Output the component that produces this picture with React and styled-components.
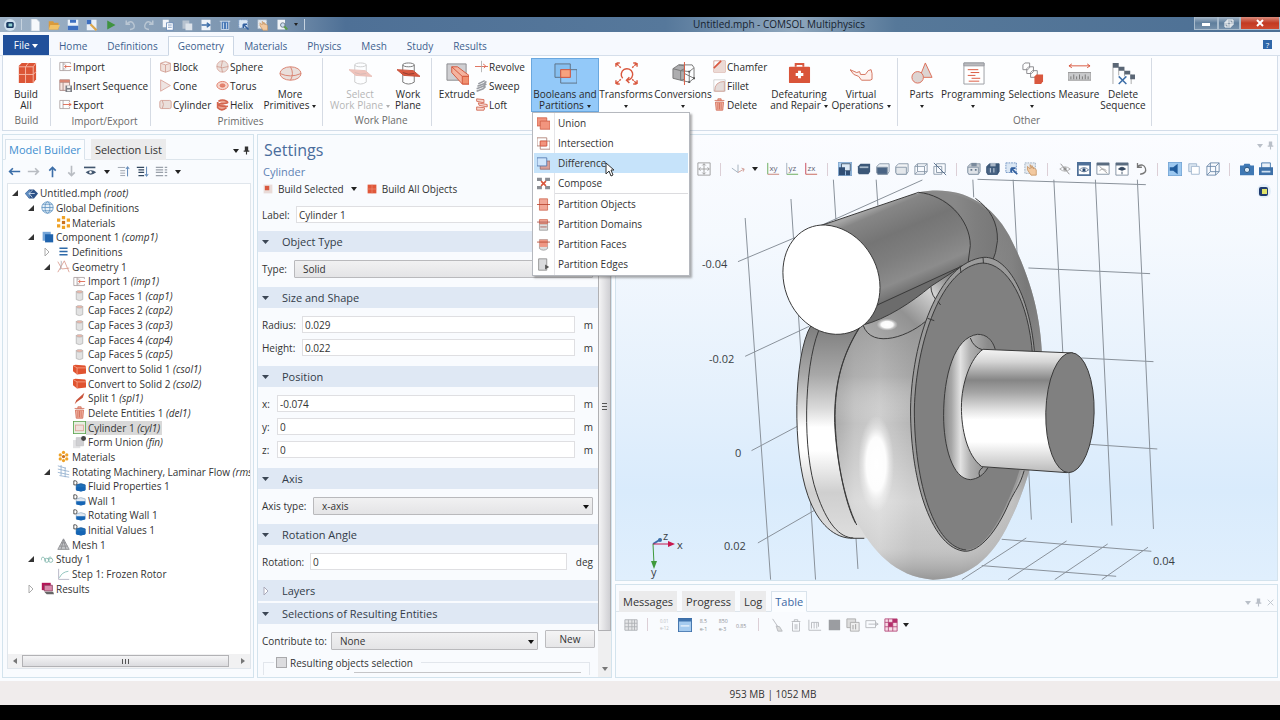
import React from "react";
import styled, { createGlobalStyle, css } from "styled-components";

const R = "#d9583f";
const P = "#f3b5a5";
const B = "#3c6ea8";
const N = "#42566f";

const Global = createGlobalStyle`
  * { box-sizing: border-box; }
  body { margin: 0; background: #000; }
  body, button, input, select { font-family: "Open Sans", "Noto Sans", sans-serif; font-size: 10px; color: #333; }
  button { border: 0; padding: 0; background: none; }
`;

/* ---------- icons ---------- */

const cyl = (s, f) => (
  <g stroke={s} fill={f}>
    <path d="M4 3v10q4 2.500 8 0V3z" />
    <ellipse cx="8" cy="3.500" rx="4" ry="1.500" fill={P} />
  </g>
);
const brick = (
  <>
    <path d="M0 3l3-1 12 1 1 2v8l-11 1-5-4z" fill="#e0532f" />
    <path d="M0 3l5 3h11M5 6v8" stroke="#f7a58d" fill="none" />
  </>
);
const blueNode = (top) => (
  <>
    <path d="M4 6q6-3 11 0v6q-5 3-11 0z" fill={top ? "#dfe7f0" : "#1f6fb8"} stroke={top ? "#9fb6cd" : "#1f5f9f"} />
    <path d="M4 9h11v4q-5 2-11 0z" fill="#1565b5" />
    <path d="M1 1h2q2 0 2 2.500T3 6H1z" fill="#fff" stroke="#333" />
  </>
);
const axes = (a, b, s) => (
  <>
    <path d="M2 1v13" stroke={a} fill="none" />
    <path d="M2 14h13" stroke={b} fill="none" />
    <text x="4" y="10" fontSize="9" fill="#667">{s}</text>
  </>
);
const cube = (front, top, line) => (
  <g stroke={line} strokeLinejoin="round">
    <path d="M1 5l3-3h11v9l-2 3H2l-1-2z" fill={top} />
    <path d="M1 6h12v8H2l-1-2z" fill={front} />
  </g>
);
const lens = (fill) => (
  <>
    <path d="M1 8q7-7 14 0q-7 6-14 0z" fill="#fff" stroke={fill} />
    <circle cx="8" cy="8" r="2.500" fill={fill} />
  </>
);
const plane = (
  <g fill="none">
    <ellipse cx="12" cy="3" rx="6" ry="2" stroke="#777" />
    <path d="M6 3v18q6 4 12 0V3" stroke="#777" />
    <path d="M0 8l17 1 7 6-17-1z" fill={R} stroke="#c5513b" />
    <path d="M6 11q6 3 12 1" stroke="#8c3d30" />
  </g>
);

const ICONS = {
  app: <><circle cx="8" cy="8" r="8" fill="#cfe0ee" /><rect x="3" y="4" width="10" height="8" rx="2" fill="#16365f" /><rect x="6" y="6" width="5" height="4" fill="#8fd0d0" /></>,
  page: <path d="M3 0h7l4 4v12H3z" fill="#f6f8fb" stroke="#c8d2dc" />,
  open: <><path d="M1 3h6l1 2h6v9H1z" fill="#d99a3c" /><path d="M3 8h13l-3 6H1z" fill="#f1c267" /></>,
  save: <><path d="M1 1h14v14H1z" fill="#e9f0f8" /><path d="M1 9h14v6H1zM4 1h8v4H4z" fill="#3d6fc0" /></>,
  savePen: <><path d="M1 1h13v14H1z" fill="#e9f0f8" /><path d="M1 1h6v6H1z" fill="#3d6fc0" /><path d="M6 7l8 8" stroke="#dca64b" strokeWidth="3" /></>,
  play: <path d="M3 2l11 6-11 6z" fill="#3f9340" />,
  undo: <path d="M4 6q6-5 9 1t-5 7M3 2v5h5" fill="none" stroke="#b9c6d3" strokeWidth="2" />,
  redo: <path d="M12 6q-6-5-9 1t5 7M13 2v5H8" fill="none" stroke="#b9c6d3" strokeWidth="2" />,
  copy: <><path d="M1 1h8v10H1z" fill="#f2f5f9" /><path d="M6 5h9v10H6z" fill="#fff" stroke="#5a7fb0" /><path d="M8 8h5M8 11h5" stroke="#5a7fb0" /></>,
  paste: <><path d="M2 2h9v11H2z" fill="#b6c2cf" /><path d="M6 6h9v9H6z" fill="#dce3ea" /></>,
  dup: <><path d="M2 1h12v14H2z" fill="#eef3f8" /><path d="M2 8h11M9 5l4 3-4 3" stroke="#3c6ea8" strokeWidth="2" fill="none" /></>,
  bin: <path d="M1 3h14M3 3v11h10V3M6 5v8M10 5v8" stroke="#e3ecf6" fill="#4b7bb8" />,
  selBox: <><path d="M1 1h12v11H1z" fill="#dbe7f4" stroke="#6a8fc0" strokeDasharray="2 1" /><path d="M7 7l7 7M7 7h5M7 7v5" stroke="#315f9f" strokeWidth="2" /></>,
  hand: <><path d="M1 1h12v12H1z" fill="#e5eaf0" stroke="#9ab" strokeDasharray="2 1" /><path d="M8 15l-4-6V5l3 3V3l2 4V4l2 4v-2l3 3v6z" fill="#f2c9a0" stroke="#c9996a" /></>,
  find: <><path d="M2 1h10v13H2z" fill="#f0f3f6" /><circle cx="9" cy="8" r="3" fill="#cde" stroke="#567" /><path d="M11 10l4 4" stroke="#5a9d4d" strokeWidth="3" /></>,

  buildAll: <><path d="M4 4l3-3h15v17l-3 4H4z" fill="#dc5536" /><path d="M4 5h15v17M11 5v17M4 13h15M19 5l3-4M11 5l3-4M19 13l3-3" stroke="#f6b7a5" fill="none" /></>,
  imp: <><path d="M1 3h13M1 13h13M1 3v10M5 3v10M14 3v2M14 11v2M5 5h3M5 11h3" stroke="#a79c9c" fill="none" /><path d="M15 8H7M9 6L7 8l2 2" stroke={R} fill="none" /></>,
  exp: <><path d="M1 3h12M1 13h12M1 3v10M5 3v10M13 3v2M13 11v2" stroke="#a79c9c" fill="none" /><path d="M5 8h10M12 6l3 2-3 2" stroke={R} fill="none" /></>,
  ins: <><path d="M1 1h12v13H1zM1 4h12M5 4v10" stroke="#a07f7a" fill="#f8e6e1" /><path d="M1 1h12v3H1z" fill="#d98673" /><path d="M8 8h8v8H8z" fill="#7c7f86" /><path d="M10 8h4v3h-4zM10 13h4v2h-4z" fill="#eee" /></>,
  block: <path d="M2 4l6-2 6 2v9l-6 2-6-2zM2 4l6 2 6-2M8 6v9" fill="#f1e1dc" stroke="#cf9a8e" />,
  cone: <path d="M2 1l12 7-12 7z" fill="#eee4e2" stroke="#d79f94" />,
  cylinder: <><rect x="1" y="3" width="14" height="10" rx="2" fill="#eadfdb" stroke="#cf9a8e" /><path d="M4 3q3 5 0 10" stroke="#cf9a8e" fill="none" /></>,
  sphere: <><circle cx="8" cy="8" r="7" fill="#eadfdb" stroke="#d7a398" /><path d="M1 8q7 3 14 0M8 1q-3 7 0 14" stroke="#cf9a8e" fill="none" /></>,
  torus: <><ellipse cx="8" cy="8" rx="7" ry="5" fill="#f6d5cc" stroke="#dd6e58" /><ellipse cx="8" cy="8" rx="3" ry="2" fill="#e4836f" stroke="#dd6e58" /></>,
  helix: <path d="M3 4q5-3 10 0t-8 3q-5 2 3 3t5 0M2 5v7q5 5 11 0" fill="#eba694" stroke="#d3654f" strokeWidth="2" />,
  more: <g fill="#eadfdb" stroke="#d98270"><ellipse cx="12" cy="12" rx="11" ry="7" /><path d="M1 12q11 5 22 0M12 5q4 7 0 14" fill="none" /></g>,
  plane,
  extrude: <><path d="M1 2h20v17H1z" fill="#cfcfd2" stroke="#8b8b8f" /><path d="M6 5h6l12 9v9h-7L6 11z" fill="#f4b39e" stroke="#d3583e" /><path d="M6 5l11 10h7" fill="none" stroke="#d3583e" /><path d="M17 15h7v8h-7z" fill="#f0906f" stroke="#d3583e" /></>,
  revolve: <><path d="M0 8h16" stroke={R} /><path d="M8 1v14" stroke="#aaa" /><path d="M10 5q5 2 1 5" stroke={R} fill="none" /></>,
  sweep: <><path d="M2 12l8-3 4-3M3 9l8-3 3-3M4 6l8-4M2 15l8-3 3-3" stroke="#9a9da3" strokeWidth="2" fill="none" /></>,
  loft: <g fill="#f7d5cb" stroke="#d0604a"><path d="M2 1l9 1v4L2 4zM4 6l11 2v3L5 9zM2 11l10 1-1 3H2z" /></g>,
  bool: <g stroke="#5f7285"><path d="M1 2h16v14H1z" fill="#86bff0" /><path d="M7 8h17v14H7z" fill="none" /><path d="M7 8h10v8H7z" fill="#f7a27f" stroke={R} /></g>,
  transforms: <g fill="none" stroke={R} strokeWidth="1.500"><path d="M8 17a6 6 0 1 1 5 2M15 22l-3-3 3-3" /><path d="M1 5V1h4M1 1l5 5M23 5V1h-4M23 1l-5 5M1 19v4h4M1 23l5-5M23 19v4h-4M23 23l-5-5" strokeDasharray="4 1" /></g>,
  conversions: <><path d="M1 7l6-4 6 1v14l-4 1-8-2z" fill="#adadaf" stroke="#777" /><path d="M1 7l8 2 4-2M9 9v10M7 3h14l2 3v11l-5 4-9-2M9 9l9 1 5-4M18 10v11M13 12l10 5" stroke="#777" fill="none" /><path d="M13 0v24" stroke={R} /><path d="M17 9h2v2h-2zM22 16h2v2h-2zM17 20h2v2h-2z" fill="#555" /></>,
  chamfer: <><path d="M1 1h14v14H1z" fill="none" stroke="#cf9a8e" /><path d="M1 15V9l8-8h6v14z" fill="#ecdad5" /><path d="M1 10l9-9" stroke={R} strokeWidth="2" /></>,
  fillet: <><path d="M1 1h14v14H1z" fill="none" stroke="#ccc" /><path d="M2 15Q2 3 14 3v12z" fill="#e4dcda" stroke="#cf9a8e" /></>,
  trash: <><path d="M2 3h12M6 3V1h4v2M3 5h10l-1 10H4z" fill="#f3b5a5" stroke="#cf6a54" /><path d="M6 6v8M8 6v8M10 6v8" stroke="#cf6a54" /></>,
  defeat: <><path d="M8 5V2h8v3" fill="none" stroke={R} strokeWidth="2" /><rect x="1" y="5" width="22" height="17" rx="1" fill="#d95439" /><path d="M12 9v8M8 13h8" stroke="#fff" strokeWidth="3" /></>,
  virtual: <path d="M0 8l7 3 3-1 1 3h5l3-4 3-1 1 4v6l-2 1h-9l-3-4-5-2z" fill="#fdf1ee" stroke="#d3725d" />,
  parts: <g fill="#ddd4d2" stroke="#dd6e58"><path d="M16 1l7 15H10z" /><circle cx="8" cy="16" r="6" /></g>,
  programming: <><path d="M2 1h21v22H2z" fill="#fff" stroke="#9b9da3" /><path d="M2 1h21v3H2z" fill="#b9babd" stroke="#9b9da3" /><path d="M6 8h11M9 11h9M6 14h8M10 17h9M7 20h11" stroke={R} /></>,
  selections: <><g fill="#fff" stroke="#8b8b8f"><path d="M2 3l2-2h5v5L7 8H2zM6 7l2-2h5v5l-2 2H6zM10 11l2-2h5v5l-2 2h-5z" /></g><path d="M14 15l2-2h7v7l-2 3h-7z" fill={R} /></>,
  measure: <><path d="M1 4h22M4 2L1 4l3 2M20 2l3 2-3 2" stroke={R} fill="none" /><path d="M0 11h24v8H0z" fill="#c9cacc" stroke="#999" /><path d="M3 15v3M6 13v5M9 15v3M12 13v5M15 15v3M18 13v5M21 15v3" stroke="#777" /></>,
  delSeq: <><path d="M1 1v22M7 5v9M13 9v6M20 13v10" stroke="#aaa" /><path d="M1 1h6v5H1zM7 5h6v4H7zM13 9h6v4h-6zM19 13h5v5h-5z" fill="#5a6675" /><path d="M7 15l8 8M15 15l-8 8" stroke="#3c6ea8" strokeWidth="1.500" /></>,

  mUnion: <path d="M0 1h12v4h4v10H4v-4H0zM4 5h8M4 5v6" fill="#f2957e" stroke="#cf5f48" />,
  mInter: <g fill="none" stroke="#a8766b"><path d="M0 1h12v10H0zM4 5h12v10H4z" /><path d="M4 5h8v6H4z" fill="#f2957e" stroke={R} /></g>,
  mDiff: <g><path d="M4 5h12v10H4z" fill="#d9a097" stroke="#9a6a6a" /><path d="M0 1h12v10H0z" fill="#cfe5fb" stroke="#4c74ad" /></g>,
  mComp: <g fill="#8a8d93"><path d="M0 1h6v4H0zM10 1h6v4h-6zM0 11h6v4H0zM10 11h6v4h-6z" /><path d="M5 5l6 6M11 5l-6 6" stroke={R} strokeWidth="2" /></g>,
  mPO: <><path d="M3 1h10v14H3z" fill="#f1a797" stroke="#cf6a54" /><path d="M0 8h16" stroke="#b5412b" /></>,
  mPD: <><path d="M3 7h10v8H3z" fill="#ddd" stroke="#999" /><path d="M3 2h10v5H3z" fill="#f1a797" stroke="#cf6a54" /><path d="M0 5h16M4 11h8" stroke="#a5514b" /></>,
  mPF: <><path d="M3 2h10v11q-5 4-10 0z" fill="#ddd" stroke="#999" /><path d="M3 2h10v9H3z" fill="#ef9784" /><path d="M0 5h16" stroke="#b5412b" /></>,
  mPE: <><path d="M2 1h10v14H2z" fill="#dadbdd" stroke="#888" /><path d="M10 8l5 3-5 3z" fill="#555" /></>,

  left: <path d="M15 8H3M6 4L2 8l4 4" fill="none" stroke={B} strokeWidth="2" />,
  right: <path d="M1 8h12M10 4l4 4-4 4" fill="none" stroke="#b8bcc2" strokeWidth="2" />,
  up: <path d="M8 15V3M4 7l4-4 4 4" fill="none" stroke={B} strokeWidth="2" />,
  down: <path d="M8 1v12M4 9l4 4 4-4" fill="none" stroke="#b8bcc2" strokeWidth="2" />,
  eyeBar: <><path d="M0 3h14" stroke={N} strokeWidth="2" /><path d="M2 9q7-5 13 0q-7 6-13 0z" fill={N} /><circle cx="8" cy="9" r="1.500" fill="#fff" /></>,
  treeUp: <><path d="M1 3h9M4 7h6M4 10h6M4 13h6" stroke="#8b939e" /><path d="M13 14V3M11 5l2-3 2 3" stroke={B} fill="none" /></>,
  treeDn: <><path d="M1 3h9M3 6h7M3 9h7M3 13h7" stroke="#33475f" strokeWidth="1.500" /><path d="M13 2v11M11 11l2 3 2-3" stroke={B} fill="none" /></>,
  grid3: <path d="M1 3h9M1 6h9M1 9h9M1 13h9M12 3h3M12 6h3M12 9h3M12 13h3" stroke="#9aa1aa" strokeWidth="1.500" />,
  root: <><path d="M0 8l5-5h6l5 5-5 6H5z" fill="#2c5187" /><path d="M0 8l6-5v11z" fill="#5f8cc0" /><path d="M9 4l-4 4 4 5M5 8h7" stroke="#dce9f5" fill="none" /></>,
  globe: <g fill="#e6f0f8" stroke="#5f92c2"><circle cx="8" cy="8" r="7" /><ellipse cx="8" cy="8" rx="3" ry="7" fill="none" /><path d="M1 8h14M2 4h12M2 12h12" /></g>,
  mats: <g fill="#efa226"><path d="M0 3h4v4H0zM6 0h4v4H6zM12 3h4v4h-4zM0 10h4v4H0zM12 10h4v4h-4zM6 12h4v4H6z" /><path d="M6 6h4v4H6z" fill="#c9701d" /></g>,
  mats2: <g fill="#efa226"><circle cx="8" cy="3" r="2" /><circle cx="8" cy="13" r="2" /><circle cx="4" cy="6" r="2" /><circle cx="12" cy="6" r="2" /><circle cx="4" cy="11" r="2" /><circle cx="12" cy="11" r="2" /><circle cx="8" cy="8" r="2" fill="#c9701d" /></g>,
  comp: <><path d="M2 1h10v11H2z" fill="#74a5d8" /><path d="M5 4h10v10H5z" fill="#1f63ad" /></>,
  defs: <path d="M3 4h10M3 8h10M3 12h10" stroke="#2e6aa9" strokeWidth="2" />,
  geom: <><path d="M1 2l5 9 9-1M15 15L9 1 1 15" stroke="#d9998d" fill="none" /><path d="M4 12q2-9 1-11" stroke="#a9a9b0" fill="none" /></>,
  cap: cyl("#b5b5b5", "#e2e2e2"),
  brick,
  split: <path d="M2 15l2-5L14 1 12 7 5 12z" fill="#c9533a" />,
  cylNode: <><path d="M0 0h16v16H0z" fill="#e7efe2" stroke="#5aa34b" strokeWidth="2" /><rect x="3" y="5" width="10" height="7" fill="#efe0dc" stroke="#d9a094" /></>,
  form: <><path d="M0 5h9v10H0z" fill="#e2e2e4" /><path d="M4 2h9v10H4z" fill="#cfcfd2" stroke="#c5c5c8" /><circle cx="13" cy="3" r="3" fill="#444" /></>,
  flow: <g stroke="#8fadcc" fill="none"><path d="M1 1l10 3M1 5l14 3M1 9l14 3M3 13l12 2M5 0v13M10 3v12" /></g>,
  node: blueNode(false),
  wall: blueNode(true),
  mesh: <><path d="M8 1l7 13H1z" fill="#c3c5c8" stroke="#8b8b8f" /><path d="M3 10h10M5 6h6M8 2L5 14M8 2l3 12" stroke="#8b8b8f" /></>,
  study: <g fill="none" stroke="#7ab3a8"><path d="M0 9q1-6 4-3l2 4" /><circle cx="7" cy="9" r="2.500" /><circle cx="12" cy="9" r="2.500" /><path d="M9 8q1-5 4-2" /></g>,
  step: <><path d="M2 1v13h13" stroke="#aab" fill="none" /><path d="M3 12q3-7 11-8" stroke="#7ab8b0" fill="none" /></>,
  results: <><path d="M1 1h11v9H1z" fill="#b51557" /><path d="M4 4h10v7H4z" fill="#d98aac" stroke="#8c4060" /><path d="M4 12h11l1 3H7z" fill="#666" /></>,
  buildSel: <><path d="M1 1h14v14H1z" fill="#e9dbd8" /><path d="M3 3h7v7H3z" fill={R} /></>,
  buildObj: <><path d="M1 1h14v14H1z" fill="#e0583a" /><path d="M1 8h14M8 1v14" stroke="#ec8d76" /></>,

  zoomExt: <path d="M1 1h14v14H1zM8 2v12M2 8h12M6 4l2-2 2 2M6 12l2 2 2-2M4 6L2 8l2 2M12 6l2 2-2 2" stroke="#999" fill="none" />,
  triad: <><path d="M8 12V3M8 12L1 7" stroke="#9caab8" fill="none" /><path d="M8 12l7-4M12 7l3 1-1 3" stroke="#d09a92" fill="none" /></>,
  xy: axes("#5aa34b", "#c4786a", "xy"),
  yz: axes("#9aa8b8", "#5aa34b", "yz"),
  zx: axes("#c4384a", "#c4584a", "zx"),
  g1: <><rect x="0" y="0" width="16" height="16" rx="1" fill="#a8cbec" stroke="#6a90ba" /><path d="M4 2h10v8H4z" fill="#dce9f5" stroke={N} /><path d="M1 6h7v9H1zM9 10h5v5H9z" fill="#314f75" /></>,
  g2: <><path d="M1 5l3-3h11v9l-2 3H2l-1-2z" fill="#3c5878" /><path d="M3 6h10" stroke="#a8bacb" strokeWidth="2" /></>,
  g3: cube("#4a6484", "#e9eef3", "#8595a6"),
  g4: cube("#e3e7eb", "#f1f3f5", "#8595a6"),
  g5: <g stroke="#8595a6" fill="none"><path d="M1 5l3-3h11v9l-3 3H1zM1 5h11l3-3M12 5v9M4 2v9h11M4 11l-3 3" /></g>,
  g6: <g stroke="#8595a6" fill="none"><path d="M4 2h10v10H4zM1 5h9v9H1z" /><path d="M1 1l14 14" stroke="#4a6484" /></g>,
  cam1: <>{cube("#dfe3e8", "#c5cbd2", "#8595a6")}<path d="M5 1h6v4H5z" fill="#7a8a9c" /><path d="M4 9h2M9 9h2" stroke="#67798c" strokeWidth="2" /></>,
  cam2: <>{cube("#4a6484", "#3b5777", "#3b5777")}<path d="M5 1h6v4H5z" fill="#a8b6c6" /><path d="M5 7v5M9 7v5" stroke="#d6e0ea" /></>,
  hideEye: <><path d="M2 8q6-5 12 0q-6 5-12 0z" fill="none" stroke="#aaa" /><circle cx="8" cy="8" r="2" fill="#999" /><path d="M3 2l10 12" stroke="#888" /></>,
  eyeWin: <><path d="M1 1h14v14H1z" fill="#fff" stroke="#4f7098" strokeWidth="2" /><path d="M1 1h14v3H1z" fill="#4f7098" /><g transform="translate(2 3) scale(.75)">{lens("#27476e")}</g></>,
  winOff: <><path d="M1 1h14v13H1z" fill="#fff" stroke="#7a8a9c" /><path d="M1 1h14v3H1z" fill="#5a6c80" /><path d="M4 5l9 8M4 10q4-4 8 0" stroke="#999" fill="none" /></>,
  winEye: <><path d="M1 1h14v14H1z" fill="#fff" stroke="#7a8a9c" /><path d="M1 1h14v3H1z" fill="#5a6c80" /><path d="M4 8q4-4 8 0q-4 3-8 0zM8 11v3" fill="#33475f" stroke="#33475f" /></>,
  reset: <path d="M4 5q7-4 9 2t-6 7M4 1v5h5" fill="none" stroke="#777" strokeWidth="1.500" />,
  light: <><rect x="0" y="0" width="16" height="16" rx="1" fill="#9cc8f0" stroke="#5a8cc0" /><path d="M2 6h4l5-4v12l-5-4H2z" fill="#1f5b9c" /></>,
  trans: <g stroke="#9db4cb"><path d="M2 2h9v9H2z" fill="#dde8f2" /><path d="M5 5h9v9H5z" fill="#fff" /></g>,
  wire: <g stroke="#6a88a8" fill="none"><path d="M1 5h10v10H1zM5 1h10v10H5zM1 5l4-4M11 5l4-4M11 15l4-4M1 15l4-4" /></g>,
  photo: <><path d="M0 4h4l1-2h6l1 2h4v11H0z" fill="#3f78b4" /><circle cx="8" cy="9" r="3" fill="#d9e8f5" stroke="#174776" /></>,
  print: <><path d="M3 1h10v6H3z" fill="#eaf1f8" stroke="#3d70a8" /><path d="M0 6h16v9H0z" fill="#3d70a8" /><path d="M3 11h10" stroke="#cfe0f0" strokeWidth="2" /></>,

  tbl: <><path d="M1 2h14v12H1z" fill="#e6e7e9" stroke="#aeb0b5" /><path d="M1 6h14M1 10h14M5 2v12M9 2v12M12 2v12" stroke="#aeb0b5" /></>,
  n1: <g fill="#b9bbbf"><text x="1" y="6" fontSize="5">0.01</text><text x="1" y="14" fontSize="5">e-12</text></g>,
  nAuto: <><rect x="0" y="0" width="16" height="16" rx="1" fill="#a5cbef" stroke="#3c6ea8" strokeWidth="2" /><path d="M1 1h14v3H1z" fill="#3f73ad" /><path d="M3 9h10" stroke="#d9e9f8" strokeWidth="2" /></>,
  n2: <g fill="#8f9196"><text x="3" y="6" fontSize="6">8.5</text><text x="3" y="15" fontSize="6">e-1</text></g>,
  n3: <g fill="#8f9196"><text x="3" y="6" fontSize="6">850</text><text x="3" y="15" fontSize="6">e-3</text></g>,
  n4: <text x="1" y="11" fontSize="6" fill="#8f9196">0.85</text>,
  broom: <path d="M3 1l6 9M7 9l4 1 3 5H9z" stroke="#b5b7bb" fill="#ddd" />,
  binG: <path d="M3 4h10M6 4V2h4v2M4 5v10h8V5M7 7v6M9 7v6" stroke="#b5b7bb" fill="none" />,
  plot: <path d="M1 2v12h14M4 5v7M7 5v7M10 5v7M4 5h8v5" stroke="#b5b7bb" fill="none" />,
  solid: <path d="M2 2h13v12H2z" fill="#9b9da1" />,
  copyG: <><path d="M1 1h10v10H1z" fill="#ddd" stroke="#aaa" /><path d="M5 5h10v10H5z" fill="#eee" stroke="#aaa" /><path d="M8 8v5M11 7v6" stroke="#999" /></>,
  expG: <path d="M1 3h11v8H1zM4 7h11M12 5l3 2-3 2" stroke="#b5b7bb" fill="none" />,
  tblR: <><path d="M1 1h14v14H1z" fill="#f7dce6" stroke="#b54a7c" /><path d="M1 5h14M1 10h14M5 1v14M10 1v14" stroke="#b54a7c" /><path d="M5 5h5v5H5zM10 1h5v4h-5z" fill="#b5306c" /></>,
  pin: <path d="M5 1h6v7h2v2H9v5H7v-5H3V8h2z" fill="currentColor" />,
  close: <path d="M3 3l10 10M13 3L3 13" stroke="currentColor" strokeWidth="1.500" />,
};

const Glyph = styled.svg`
  flex: none;
  display: block;
  width: ${(p) => p.$s}px;
  height: ${(p) => p.$s}px;
`;
const Icon = ({ name, size = 13, box = 16 }) => (
  <Glyph $s={size} viewBox={`0 0 ${box} ${box}`} aria-hidden="true">{ICONS[name]}</Glyph>
);
const Caret = styled.span`
  display: inline-block;
  flex: none;
  vertical-align: middle;
  border: ${(p) => p.$s || 2}px solid transparent;
  border-top: ${(p) => (p.$s || 2) + 1}px solid ${(p) => p.$c || "#222"};
  border-bottom: 0;
  margin-left: ${(p) => p.$m || 0}px;
`;

/* ---------- window frame ---------- */

const Screen = styled.div`
  min-height: 100vh;
  display: flex;
  flex-direction: column;
  padding: 17px 0 15px;
  background: #000;
`;
const TitleBar = styled.header`
  height: 15px;
  display: flex;
  align-items: center;
  background: linear-gradient(90deg, #9fb3c7 0, #7690ac 22%, #4e7096 27%, #56789b 52%, #8fa7bd 62%, #567899 70%, #4d7095 100%);
`;
const QuickBar = styled.div`
  display: flex;
  align-items: center;
  padding-left: 2px;
`;
const QuickButton = styled.button`
  width: ${(p) => p.$w || 19}px;
  height: 15px;
  display: flex;
  align-items: center;
  justify-content: center;
`;
const QuickLine = styled.span`
  width: 1px;
  height: 11px;
  margin: 0 3px;
  background: #c6d3df;
`;
const WindowTitle = styled.h1`
  flex: 1;
  margin: 0;
  padding-left: 56px;
  text-align: center;
  font-size: 10px;
  line-height: 15px;
  font-weight: 400;
  color: #16222e;
`;
const WinButton = styled.button`
  width: ${(p) => p.$w}px;
  height: 13px;
  align-self: flex-start;
  display: flex;
  align-items: center;
  justify-content: center;
  border: 1px solid #a9bccd;
  border-top: 0;
  background: ${(p) => (p.$close ? "linear-gradient(#d98b7c, #c23a22 50%, #cf4a30)" : "linear-gradient(#a5b7c8, #5f7e9c 50%, #7590ab)")};
`;

/* ---------- ribbon ---------- */

const TabStrip = styled.nav`
  display: flex;
  align-items: flex-end;
  height: 24px;
  padding: 0 8px 0 3px;
  background: #f6f9fe;
  border-bottom: 1px solid #d5dfeb;
`;
const FileTab = styled.button`
  width: 46px;
  height: 20px;
  background: #21509b;
  color: #fff;
`;
const RibbonTab = styled.button`
  height: 20px;
  padding: 0 9px;
  margin-bottom: -1px;
  border: 1px solid transparent;
  color: #3d5f8e;
  ${(p) => p.$on && css`
    background: #fdfeff;
    border-color: #cbd6e4;
    border-bottom-color: #fdfeff;
  `}
`;
const Help = styled.button`
  margin: 0 0 6px auto;
  width: 9px;
  height: 9px;
  background: #2f66a8;
  color: #fff;
  font-size: 8px;
  line-height: 9px;
`;
const RibbonBand = styled.div`
  padding: 0 2px;
  background: #f6f9fe;
`;
const Ribbon = styled.div`
  display: flex;
  height: 75px;
  padding: 2px 0 4px;
  background: #fdfeff;
  border: 1px solid #d3dde9;
  border-top: 0;
`;
const Group = styled.section`
  width: ${(p) => p.$w}px;
  padding-left: ${(p) => p.$p || 0}px;
  display: flex;
  flex-direction: column;
  border-right: 1px solid #d5dbe4;
`;
const GroupItems = styled.div`
  display: flex;
  height: 57px;
`;
const GroupName = styled.div`
  text-align: center;
  line-height: 12px;
  color: #6a6a6a;
`;
const BigButton = styled.button`
  width: ${(p) => p.$w}px;
  height: 54px;
  display: flex;
  flex-direction: column;
  align-items: center;
  gap: 4px;
  padding-top: 4px;
  white-space: nowrap;
  line-height: 11px;
  opacity: ${(p) => (p.disabled ? 0.35 : 1)};
  color: #2a2a2a;
  ${(p) => p.$on && css`
    background: #93c9f9;
    outline: 1px solid #6aa7de;
    outline-offset: -1px;
  `}
`;
const SmallColumn = styled.div`
  width: ${(p) => p.$w}px;
  display: flex;
  flex-direction: column;
`;
const SmallButton = styled.button`
  height: 19px;
  padding-bottom: 2px;
  display: flex;
  align-items: center;
  gap: 1px;
  white-space: nowrap;
  color: #2a2a2a;
`;
const MenuAnchor = styled.div`
  position: relative;
`;
const Menu = styled.div`
  position: absolute;
  z-index: 5;
  top: 54px;
  left: 1px;
  width: 158px;
  padding: 0 1px 1px;
  background: linear-gradient(90deg, #fff 21px, #e5e5e8 21px, #e5e5e8 22px, #fff 22px);
  border: 1px solid #b5b8be;
  box-shadow: 2px 2px 2px #6668;
`;
const MenuItem = styled.button`
  width: 100%;
  height: 20px;
  display: flex;
  align-items: center;
  gap: 8px;
  padding-left: 3px;
  background: ${(p) => (p.$on ? "#c6e3fa" : "transparent")};
`;
const MenuLine = styled.hr`
  height: 1px;
  border: 0;
  margin: 0 0 0 21px;
  background: #dcdcdf;
`;
const Pointer = styled.svg`
  position: absolute;
  left: 72px;
  top: 49px;
  width: 10px;
  height: 15px;
`;

const Big = ({ w, icon, lines, caret, ...rest }) => (
  <BigButton $w={w} {...rest}>
    <Icon name={icon} size={23} box={24} />
    <span>
      {lines.map((l, i) => (
        <React.Fragment key={l}>
          {i > 0 && <br />}
          {l}
          {caret && i === 1 && <Caret $m={3} />}
        </React.Fragment>
      ))}
      {caret && lines.length === 1 && <><br /><Caret /></>}
    </span>
  </BigButton>
);
const Smalls = ({ w, items }) => (
  <SmallColumn $w={w}>
    {items.map(([icon, text]) => (
      <SmallButton key={text}><Icon name={icon} />{text}</SmallButton>
    ))}
  </SmallColumn>
);

/* ---------- panels ---------- */

const Work = styled.main`
  flex: 1;
  display: grid;
  grid-template-columns: 252px 355px minmax(0, 1fr);
  column-gap: 3px;
  padding: 3px 2px;
  background: #fafcff;
`;
const Panel = styled.section`
  display: flex;
  flex-direction: column;
  min-width: 0;
  background: #f9fbfe;
  border: 1px solid #d3e3ed;
`;
const PanelTabs = styled.div`
  display: flex;
  align-items: flex-end;
  gap: ${(p) => p.$gap || 6}px;
  padding: ${(p) => p.$pad};
  border-bottom: 1px solid #dde5ec;
`;
const PanelTab = styled.button`
  height: 21px;
  padding: 0 3px;
  font-size: 11px;
  margin-bottom: -1px;
  white-space: nowrap;
  background: #ebebec;
  color: #333;
  border: 1px solid #ebebec;
  ${(p) => p.$on && css`
    background: #fbfdff;
    color: ${p.$on};
    border-color: #d9e3ec;
    border-bottom-color: #fbfdff;
  `}
`;
const PanelTools = styled.div`
  display: flex;
  align-items: center;
  gap: 3px;
  margin-left: auto;
  padding: 0 2px 4px 0;
  color: ${(p) => p.$c || "#333"};
`;
const IconBar = styled.div`
  display: flex;
  align-items: center;
  height: ${(p) => p.$h}px;
  padding: ${(p) => p.$pad};
  justify-content: ${(p) => p.$align || "flex-start"};
`;
const IconButton = styled.button`
  flex: none;
  width: ${(p) => p.$w || 19}px;
  height: 17px;
  display: flex;
  align-items: center;
  justify-content: center;
`;
const BarLine = styled.span`
  flex: none;
  width: 1px;
  height: 13px;
  margin: 0 ${(p) => p.$m || 7}px 0 7px;
  background: #dccfd6;
`;

const TreeFrame = styled.div`
  flex: 1;
  display: flex;
  flex-direction: column;
  margin: 0 2px 8px 4px;
  background: #fff;
  border: 1px solid #e0e6ec;
  overflow: hidden;
`;
const Tree = styled.ul`
  list-style: none;
  margin: 0;
  padding: 2px 0 0;
  display: grid;
  grid-template-rows: repeat(28, 1fr);
  height: 412px;
`;
const TreeRow = styled.li`
  display: flex;
  align-items: center;
  padding-left: ${(p) => 3 + p.$d * 16}px;
  white-space: nowrap;
  min-height: 0;
`;
const TreeText = styled.span`
  padding: 0 2px;
  line-height: 14px;
  background: ${(p) => (p.$on ? "#d9d9d9" : "transparent")};
`;
const Twist = styled.svg`
  flex: none;
  width: 8px;
  height: 8px;
  margin-right: 6px;
`;
const HScroll = styled.div`
  display: flex;
  align-items: center;
  gap: 5px;
  margin-top: auto;
  height: 14px;
  padding: 0 5px;
  background: #f1f1f2;
  color: #666;
`;
const HThumb = styled.div`
  flex: 1;
  height: 12px;
  margin-right: 7px;
  border: 1px solid #b2b2b5;
  background: linear-gradient(#f5f5f6, #dcdcdf);
  display: flex;
  align-items: center;
  justify-content: center;
`;
const Grip = styled.span`
  width: ${(p) => (p.$v ? 5 : 7)}px;
  height: ${(p) => (p.$v ? 7 : 5)}px;
  background: repeating-linear-gradient(${(p) => (p.$v ? "0deg" : "90deg")}, #555 0 1px, transparent 1px 3px);
`;
const Arrow = styled.span`
  border: 3px solid transparent;
  ${(p) => p.$to}: 4px solid #777;
  ${(p) => p.$off}: 0;
`;

const SettingsBody = styled.div`
  flex: 1;
  display: flex;
  min-height: 0;
`;
const Form = styled.div`
  flex: 1;
  min-width: 0;
  display: flex;
  flex-direction: column;
`;
const Title = styled.h2`
  margin: 4px 0 0 6px;
  font-size: 16px;
  line-height: 22px;
  font-weight: 400;
  color: #4a6c9c;
`;
const Sub = styled.h3`
  margin: 3px 0 0 5px;
  font-size: 11px;
  line-height: 16px;
  font-weight: 400;
  color: #5f82b4;
`;
const BuildBar = styled.div`
  display: flex;
  align-items: center;
  height: 18px;
  padding-left: 5px;
  gap: 10px;
`;
const TextButton = styled.button`
  display: flex;
  align-items: center;
  gap: 5px;
`;
const SectionHead = styled.button`
  height: 21px;
  display: flex;
  align-items: center;
  gap: 12px;
  padding-left: 4px;
  margin-bottom: ${(p) => (p.$closed ? 2 : 0)}px;
  background: #dfe8f4;
  font-size: 11px;
  color: #333c48;
`;
const Fields = styled.div`
  display: flex;
  flex-direction: column;
  gap: 6px;
  padding: ${(p) => p.$pad || "8px 5px 10px 4px"};
`;
const Field = styled.div`
  display: flex;
  align-items: center;
  height: 17px;
`;
const Label = styled.label`
  flex: none;
  width: ${(p) => p.$w}px;
  white-space: nowrap;
`;
const Input = styled.input`
  flex: 1;
  min-width: 0;
  height: 17px;
  padding: 0 2px;
  background: #fff;
  border: 1px solid #dfdfe2;
`;
const Unit = styled.span`
  width: ${(p) => p.$w}px;
  text-align: right;
`;
const SelectWrap = styled.div`
  flex: 1;
  position: relative;
  height: 18px;
`;
const Select = styled.select`
  width: 100%;
  height: 18px;
  padding: 0 8px;
  appearance: none;
  border: 1px solid #b9b9bc;
  border-radius: 1px;
  background: linear-gradient(#f1f1f2, #e4e4e6);
`;
const SelectCaret = styled.span`
  position: absolute;
  right: 4px;
  top: 8px;
  border: 3px solid transparent;
  border-top: 4px solid #111;
  border-bottom: 0;
  pointer-events: none;
`;
const PushButton = styled.button`
  width: 50px;
  height: 18px;
  margin: 0 -2px 4px 7px;
  border: 1px solid #bcbcbf;
  border-radius: 1px;
  background: linear-gradient(#f4f4f5, #e6e6e8);
`;
const CheckSet = styled.fieldset`
  height: 19px;
  margin: 3px 8px 0 5px;
  padding: 3px 8px 0 90px;
  border: 1px solid #e2e6ec;
  border-bottom: 0;
  min-width: 0;
`;
const Legend = styled.legend`
  margin-left: -80px;
  padding: 0 8px 0 2px;
  height: 13px;
  display: flex;
  align-items: center;
  gap: 3px;
`;
const Check = styled.input`
  appearance: none;
  width: 11px;
  height: 11px;
  margin: 0;
  border: 1px solid #a9a9ac;
  background: #dcdcdf;
`;
const CutOff = styled.div`
  height: 2px;
  border-top: 1px solid #c5c5c8;
`;
const VScroll = styled.div`
  width: 13px;
  display: flex;
  flex-direction: column;
  align-items: center;
  padding-bottom: 6px;
  background: #efeff0;
`;
const VThumb = styled.div`
  width: 13px;
  flex: 1;
  margin-bottom: 36px;
  padding-top: 46px;
  border: 1px solid #b0b0b3;
  background: linear-gradient(90deg, #f4f4f5, #cfcfd3);
  display: flex;
  align-items: center;
  justify-content: center;
`;

const RightSide = styled.div`
  display: flex;
  flex-direction: column;
  gap: 3px;
  min-width: 0;
`;
const Graphics = styled(Panel)`
  flex: 1;
  background: linear-gradient(#fbfcff 0, #f5f9fe 22%, #e4f0fc 60%, #d9ebfc 80%, #e0effd 100%);
`;
const Scene = styled.svg`
  display: block;
  flex: 1;
  width: 100%;
  min-height: 0;
`;
const Bottom = styled(Panel)`
  height: 94px;
`;
const Status = styled.footer`
  height: 24px;
  padding-left: 57%;
  line-height: 27px;
  color: #333;
  background: #f0ecec;
`;

/* ---------- data ---------- */

const ROWS = [
  [0, "open", "root", "Untitled.mph", "root"],
  [1, "open", "globe", "Global Definitions"],
  [2, "", "mats", "Materials"],
  [1, "open", "comp", "Component 1", "comp1"],
  [2, "shut", "defs", "Definitions"],
  [2, "open", "geom", "Geometry 1"],
  [3, "", "imp", "Import 1", "imp1"],
  [3, "", "cap", "Cap Faces 1", "cap1"],
  [3, "", "cap", "Cap Faces 2", "cap2"],
  [3, "", "cap", "Cap Faces 3", "cap3"],
  [3, "", "cap", "Cap Faces 4", "cap4"],
  [3, "", "cap", "Cap Faces 5", "cap5"],
  [3, "", "brick", "Convert to Solid 1", "csol1"],
  [3, "", "brick", "Convert to Solid 2", "csol2"],
  [3, "", "split", "Split 1", "spl1"],
  [3, "", "trash", "Delete Entities 1", "del1"],
  [3, "", "cylNode", "Cylinder 1", "cyl1"],
  [3, "", "form", "Form Union", "fin"],
  [2, "", "mats2", "Materials"],
  [2, "open", "flow", "Rotating Machinery, Laminar Flow", "rmspf"],
  [3, "", "node", "Fluid Properties 1"],
  [3, "", "wall", "Wall 1"],
  [3, "", "wall", "Rotating Wall 1"],
  [3, "", "node", "Initial Values 1"],
  [2, "", "mesh", "Mesh 1"],
  [1, "open", "study", "Study 1"],
  [2, "", "step", "Step 1: Frozen Rotor"],
  [1, "shut", "results", "Results"],
];
const QUICK = ["page", "open", "save", "savePen", "play", "undo", "redo", "copy", "paste", "dup", "bin", "selBox", "hand", "find"];
const GTOOLS = ["zoomExt", "|", "triad", "v", "xy", "yz", "zx", "|", "g1", "g2", "g3", "g4", "g5", "g6", "|", "cam1", "cam2", "selBox", "hand", "|", "hideEye", "eyeWin", "winOff", "winEye", "reset", "|", "light", "trans", "wire", "|", "photo", "print"];
const TTOOLS = ["tbl", "|", "n1", "nAuto", "n2", "n3", "n4", "|", "broom", "binG", "plot", "solid", "copyG", "expG", "tblR", "v"];

const ToolRun = ({ names, w, m, end }) =>
  names.map((n, i) => {
    if (n === "|") return <BarLine key={i} $m={m} />;
    if (n === "v") return <IconButton key={i} $w={end} aria-label="More"><Caret $s={3} /></IconButton>;
    return <IconButton key={i} $w={w} aria-label={n}><Icon name={n} size={14} /></IconButton>;
  });

const Section = ({ title, closed, pad, children }) => (
  <>
    <SectionHead $closed={closed}>
      <Glyph $s={8} viewBox="0 0 8 8" aria-hidden="true">
        {closed ? <path d="M2 0l4 4-4 4z" fill="#fff" stroke="#aab" /> : <path d="M0 2h7L3.500 6z" fill="#3b4654" />}
      </Glyph>
      {title}
    </SectionHead>
    {children && <Fields $pad={pad}>{children}</Fields>}
  </>
);
const TextField = ({ id, label, w, value, unit, uw = 18 }) => (
  <Field>
    <Label htmlFor={id} $w={w}>{label}</Label>
    <Input id={id} defaultValue={value} />
    {unit && <Unit $w={uw}>{unit}</Unit>}
  </Field>
);
const Choice = ({ id, label, w, value, children }) => (
  <Field>
    <Label htmlFor={id} $w={w}>{label}</Label>
    <SelectWrap>
      <Select id={id}><option>{value}</option></Select>
      <SelectCaret />
    </SelectWrap>
    {children}
  </Field>
);

/* ---------- 3D view ---------- */

const Line = styled.path`
  fill: none;
  stroke: ${(p) => p.$c || "#3a3a3a"};
  stroke-width: 1;
  vector-effect: non-scaling-stroke;
`;
const SceneText = styled.text`
  font-family: "Open Sans", "Noto Sans", sans-serif;
  font-size: 11px;
  fill: #3a3f45;
`;
const Grad = ({ id, stops, ...d }) => (
  <linearGradient id={id} gradientUnits="userSpaceOnUse" {...d}>
    {stops.map(([o, c]) => <stop key={o} offset={o + "%"} stopColor={c} />)}
  </linearGradient>
);
const Spot = ({ id }) => (
  <radialGradient id={id}>
    <stop offset="0%" stopColor="#fff" />
    <stop offset="55%" stopColor="#fff" stopOpacity=".95" />
    <stop offset="75%" stopColor="#fff" stopOpacity=".4" />
    <stop offset="100%" stopColor="#fff" stopOpacity="0" />
  </radialGradient>
);
const TORUS = "M716 70C800 50 880 85 930 200C990 350 1004 460 1008 570L1000 760C990 870 965 970 930 1060C890 1170 830 1232 750 1232C660 1225 605 1140 572 1060C530 960 515 800 520 700C525 600 550 520 580 470L620 300Z";

const View = () => (
  <Scene viewBox="616 179 661 402" preserveAspectRatio="xMidYMid meet" role="img" aria-label="Pump geometry">
    <defs>
      <Grad id="flange" x1="0" y1="480" x2="0" y2="1108" stops={[[0, "#808080"], [22, "#a8a8a8"], [38, "#dadada"], [47, "#fff"], [58, "#fff"], [78, "#cfcfcf"], [100, "#dedede"]]} />
      <Grad id="body" x1="515" y1="0" x2="1010" y2="0" stops={[[0, "#a8a8a8"], [10, "#c2c2c2"], [22, "#cdcdcd"], [38, "#b4b4b4"], [60, "#b5b5b5"], [85, "#9a9a9a"], [92, "#808080"], [100, "#8c8c8c"]]} />
      <Grad id="shade" x1="0" y1="60" x2="0" y2="1232" stops={[[0, "#6668"], [30, "#7779"], [48, "#8885"], [60, "#fff0"], [80, "#fff6"], [92, "#ddd6"], [100, "#888a"]]} />
      <Grad id="pipe" x1="610" y1="115" x2="735" y2="345" stops={[[0, "#a5a5a5"], [8, "#868686"], [35, "#757575"], [60, "#7e7e7e"], [85, "#8c8c8c"], [100, "#707070"]]} />
      <Grad id="elbow" x1="800" y1="0" x2="905" y2="0" stops={[[0, "#888"], [50, "#7e7e7e"], [100, "#787878"]]} />
      <Grad id="hub" x1="0" y1="541" x2="0" y2="911" stops={[[0, "#f5f5f5"], [10, "#d5d5d5"], [25, "#858585"], [35, "#a5a5a5"], [50, "#e5e5e5"], [57, "#fff"], [75, "#fff"], [100, "#b9b9b9"]]} />
      <Grad id="groove" x1="775" y1="0" x2="880" y2="0" stops={[[0, "#888"], [18, "#a8a8a8"], [38, "#e2e2e2"], [60, "#b0b0b0"], [100, "#8a8a8a"]]} />
      <Grad id="bulge" x1="600" y1="500" x2="800" y2="330" stops={[[0, "#aaa"], [40, "#929292"], [75, "#d2d2d2"], [100, "#808080"]]} />
      <Spot id="spot" />
    </defs>
    <g transform="translate(615 170) scale(0.424 0.3333)">
      <Line $c="#8a929b" d="M307 147L367 1232M415 90L473 1232M515 32L573 1200M616 32L620 110M844 32L846 85M939 32L982 1052M1035 32L1077 1062M1133 32L1172 1070M1232 32L1270 1080M855 31L1252 47M975 297L1262 314M1100 567L1270 578M1118 826L1279 840M912 1111L1265 1147M865 1190L1182 1222M970 1107L818 1232M1065 1116L927 1232M1162 1125L1037 1232M1257 1135L1148 1232M290 278L430 203M307 562L458 472M322 845L430 772M337 1122L472 1023M725 33L485 170" />
      <path fill="url(#flange)" d="M462 470C420 560 418 850 455 980C480 1070 520 1108 560 1108L600 1108L600 450Z" />
      <Line d="M462 470C420 560 418 850 455 980C480 1070 520 1108 560 1108L588 1108M480 486C445 600 442 850 475 970C500 1065 530 1106 562 1107" />
      <path fill="url(#body)" d={TORUS} />
      <path fill="url(#shade)" d={TORUS} />
      <ellipse cx="616" cy="885" rx="42" ry="145" fill="url(#spot)" />
      <Line d="M578 474C535 560 520 640 519 740C520 860 540 990 570 1068M576 476C530 570 517 660 518 760C522 880 545 1010 567 1062" />
      <path fill="url(#elbow)" d="M716 70C800 60 870 100 893 150C905 190 903 230 889 282L866 265L833 295L780 180Z" />
      <path fill="url(#pipe)" d="M485 170L705 75C780 62 838 150 838 230L830 290L600 425Z" />
      <Line d="M716 70C780 78 838 150 838 230L831 298M850 88C885 120 903 160 902 215Q900 250 888 285M485 170L716 70" />
      <path fill="#6c6c6c" d="M610 410L820 290L745 352C700 410 650 445 585 468Z" />
      <path fill="url(#bulge)" d="M585 468C640 450 700 400 745 352L822 288L765 405L740 452C700 500 605 545 585 468Z" />
      <ellipse cx="642" cy="467" rx="25" ry="18" fill="url(#spot)" />
      <Line d="M612 412L820 290M585 468C640 450 700 400 745 352L822 288M585 468C605 545 700 500 740 448M745 352Q745 380 765 403" />
      <path fill="#9b9b9b" d="M870 265C930 262 980 390 990 560C996 760 968 900 930 1000C900 1090 860 1147 826 1147C750 1140 697 950 697 720C700 520 760 280 870 265Z" />
      <path fill="#808080" d="M868 282C925 285 975 390 985 560C992 760 962 900 925 1000C895 1090 860 1143 828 1143C755 1135 706 950 706 720C710 520 770 290 868 282Z" />
      <Line d="M870 265C930 262 980 390 990 560M965 905C955 950 945 960 930 1000C900 1090 860 1147 826 1147C750 1140 697 950 697 720C700 520 760 280 870 265M868 282C925 285 975 390 985 560M828 1143C755 1135 706 950 706 720C710 520 770 290 868 282M814 290L816 312M868 266L869 283M737 448L753 455M762 398L768 408" />
      <path fill="url(#groove)" d="M855 496C885 496 895 520 897 545L880 893C870 920 850 932 838 932C795 930 775 830 775 740C775 620 800 505 855 496Z" />
      <Line d="M897 542C890 510 875 496 855 496C800 505 775 620 775 740C775 830 795 930 838 932C855 930 870 918 880 895M838 507Q845 535 868 543M868 895Q855 905 860 922" />
      <path fill="url(#hub)" d="M868 541L1080 552L1066 911L865 893C830 860 817 780 817 715C817 640 840 565 868 541Z" />
      <Line d="M1080 552L868 541C840 565 817 640 817 715C817 780 830 860 865 893L1066 911" />
      <ellipse cx="1073" cy="731" rx="57" ry="180" fill="#808080" stroke="#3a3a3a" vectorEffect="non-scaling-stroke" transform="rotate(1 1073 731)" />
      <path fill="#fff" stroke="#3a3a3a" vectorEffect="non-scaling-stroke" d="M496 168C570 175 625 265 625 355C625 440 580 498 520 496C450 492 396 405 396 310C396 225 440 165 496 168Z" />
    </g>
    <SceneText x="702" y="269">-0.04</SceneText>
    <SceneText x="709" y="364">-0.02</SceneText>
    <SceneText x="735" y="458">0</SceneText>
    <SceneText x="724" y="551">0.02</SceneText>
    <SceneText x="1153" y="566">0.04</SceneText>
    <g fill="none">
      <path d="M653 545l8-5" stroke="#3c6ea8" strokeWidth="2" />
      <circle cx="660" cy="541" r="2" fill="#3c6ea8" />
      <path d="M653 545h17" stroke="#c8184f" strokeWidth="1" />
      <path d="M668 542l7 3-7 3z" fill="#c8184f" />
      <path d="M653 545l1 20" stroke="#3f9a3b" strokeWidth="1" />
      <path d="M651 562h6l-3 8z" fill="#3f9a3b" />
    </g>
    <SceneText x="663" y="541">z</SceneText>
    <SceneText x="677" y="550">x</SceneText>
    <SceneText x="651" y="577">y</SceneText>
    <circle cx="1264" cy="192" r="7" fill="#e3eef9" />
    <rect x="1259" y="188" width="9" height="9" rx="2" fill="#203c6f" />
    <rect x="1262" y="190" width="5" height="5" fill="#dfe36a" />
  </Scene>
);

/* ---------- page ---------- */

const Twister = ({ state }) => (
  <Twist viewBox="0 0 8 8" aria-hidden="true">
    {state === "open" && <path d="M7 1v6H1z" fill="#333" />}
    {state === "shut" && <path d="M2 0l4 4-4 4z" fill="#fff" stroke="#aaa" />}
  </Twist>
);

export default function App() {
  return (
    <Screen>
      <Global />
      <TitleBar>
        <QuickBar>
          <QuickButton $w={16} aria-label="Application"><Icon name="app" size={12} /></QuickButton>
          <QuickLine />
          {QUICK.map((n) => (
            <QuickButton key={n} aria-label={n}><Icon name={n} size={12} /></QuickButton>
          ))}
          <QuickButton $w={10} aria-label="Customize"><Caret /></QuickButton>
          <QuickLine />
        </QuickBar>
        <WindowTitle>Untitled.mph - COMSOL Multiphysics</WindowTitle>
        <WinButton $w={24} aria-label="Minimize"><svg width="10" height="8"><path d="M1 4h8v3H1z" fill="#fff" /></svg></WinButton>
        <WinButton $w={22} aria-label="Restore"><svg width="10" height="9"><path d="M3 1h6v5H3zM1 3h6v5H1z" fill="#89a" stroke="#fff" /></svg></WinButton>
        <WinButton $w={40} $close aria-label="Close"><svg width="8" height="8"><path d="M1 1l6 6M7 1L1 7" stroke="#fff" strokeWidth="2" /></svg></WinButton>
      </TitleBar>

      <TabStrip>
        <FileTab>File <Caret $c="#fff" $s={3} /></FileTab>
        {["Home", "Definitions", "Geometry", "Materials", "Physics", "Mesh", "Study", "Results"].map((t) => (
          <RibbonTab key={t} $on={t === "Geometry"}>{t}</RibbonTab>
        ))}
        <Help aria-label="Help">?</Help>
      </TabStrip>

      <RibbonBand>
        <Ribbon>
          <Group $w={48}>
            <GroupItems><Big w={46} icon="buildAll" lines={["Build", "All"]} /></GroupItems>
            <GroupName>Build</GroupName>
          </Group>
          <Group $w={100} $p={8}>
            <GroupItems><Smalls w={90} items={[["imp", "Import"], ["ins", "Insert Sequence"], ["exp", "Export"]]} /></GroupItems>
            <GroupName>Import/Export</GroupName>
          </Group>
          <Group $w={172} $p={8}>
            <GroupItems>
              <Smalls w={57} items={[["block", "Block"], ["cone", "Cone"], ["cylinder", "Cylinder"]]} />
              <Smalls w={48} items={[["sphere", "Sphere"], ["torus", "Torus"], ["helix", "Helix"]]} />
              <Big w={52} icon="more" lines={["More", "Primitives"]} caret />
            </GroupItems>
            <GroupName>Primitives</GroupName>
          </Group>
          <Group $w={109} $p={8}>
            <GroupItems>
              <Big w={58} icon="plane" lines={["Select", "Work Plane"]} caret disabled />
              <Big w={38} icon="plane" lines={["Work", "Plane"]} />
            </GroupItems>
            <GroupName>Work Plane</GroupName>
          </Group>
          <Group $w={466} $p={7}>
            <GroupItems>
              <Big w={36} icon="extrude" lines={["Extrude"]} />
              <Smalls w={56} items={[["revolve", "Revolve"], ["sweep", "Sweep"], ["loft", "Loft"]]} />
              <MenuAnchor>
                <Big w={68} icon="bool" lines={["Booleans and", "Partitions"]} caret $on aria-haspopup="menu" />
                <Menu role="menu">
                  <MenuItem role="menuitem"><Icon name="mUnion" />Union</MenuItem>
                  <MenuItem role="menuitem"><Icon name="mInter" />Intersection</MenuItem>
                  <MenuItem role="menuitem" $on><Icon name="mDiff" />Difference</MenuItem>
                  <MenuItem role="menuitem"><Icon name="mComp" />Compose</MenuItem>
                  <MenuLine />
                  <MenuItem role="menuitem"><Icon name="mPO" />Partition Objects</MenuItem>
                  <MenuItem role="menuitem"><Icon name="mPD" />Partition Domains</MenuItem>
                  <MenuItem role="menuitem"><Icon name="mPF" />Partition Faces</MenuItem>
                  <MenuItem role="menuitem"><Icon name="mPE" />Partition Edges</MenuItem>
                  <Pointer viewBox="0 0 10 15" aria-hidden="true"><path d="M1 1v11l3-3 2 5 2-1-2-5h3z" fill="#fff" stroke="#333" /></Pointer>
                </Menu>
              </MenuAnchor>
              <Big w={54} icon="transforms" lines={["Transforms"]} caret />
              <Big w={60} icon="conversions" lines={["Conversions"]} caret />
              <Smalls w={57} items={[["chamfer", "Chamfer"], ["fillet", "Fillet"], ["trash", "Delete"]]} />
              <Big w={58} icon="defeat" lines={["Defeaturing", "and Repair"]} caret />
              <Big w={66} icon="virtual" lines={["Virtual", "Operations"]} caret />
            </GroupItems>
          </Group>
          <Group $w={254} $p={4}>
            <GroupItems>
              <Big w={39} icon="parts" lines={["Parts"]} caret />
              <Big w={64} icon="programming" lines={["Programming"]} caret />
              <Big w={54} icon="selections" lines={["Selections"]} caret />
              <Big w={40} icon="measure" lines={["Measure"]} />
              <Big w={48} icon="delSeq" lines={["Delete", "Sequence"]} />
            </GroupItems>
            <GroupName>Other</GroupName>
          </Group>
        </Ribbon>
      </RibbonBand>

      <Work>
        <Panel>
          <PanelTabs $pad="4px 0 0 2px">
            <PanelTab $on="#3f8fd0">Model Builder</PanelTab>
            <PanelTab>Selection List</PanelTab>
            <PanelTools><Caret $s={3} /><Icon name="pin" size={9} /></PanelTools>
          </PanelTabs>
          <IconBar $h={23} $pad="0 2px">
            {["left", "right", "up", "down", "eyeBar", "v", "treeUp", "treeDn", "grid3", "v"].map((n, i) =>
              n === "v"
                ? <IconButton key={i} $w={14} aria-label="More"><Caret $s={3} /></IconButton>
                : <IconButton key={i} $w={19} aria-label={n}><Icon name={n} size={13} /></IconButton>
            )}
          </IconBar>
          <TreeFrame>
            <Tree>
              {ROWS.map(([d, state, icon, text, tag], i) => (
                <TreeRow key={i} $d={d}>
                  <Twister state={state} />
                  <Icon name={icon} />
                  <TreeText $on={icon === "cylNode"}>{text}{tag && <> <i>({tag})</i></>}</TreeText>
                </TreeRow>
              ))}
            </Tree>
            <HScroll>
              <Arrow $to="border-right" $off="border-left" />
              <HThumb><Grip /></HThumb>
              <Arrow $to="border-left" $off="border-right" />
            </HScroll>
          </TreeFrame>
        </Panel>

        <Panel>
          <SettingsBody>
            <Form>
              <Title>Settings</Title>
              <Sub>Cylinder</Sub>
              <BuildBar>
                <TextButton><Icon name="buildSel" size={10} />Build Selected<Caret $s={3} $m={2} /></TextButton>
                <TextButton><Icon name="buildObj" size={10} />Build All Objects</TextButton>
              </BuildBar>
              <Fields $pad="8px 5px 8px 4px">
                <TextField id="lbl" label="Label:" w={34} value="Cylinder 1" />
              </Fields>
              <Section title="Object Type"><Choice id="type" label="Type:" w={32} value="Solid" /></Section>
              <Section title="Size and Shape">
                <TextField id="rad" label="Radius:" w={40} value="0.029" unit="m" />
                <TextField id="hei" label="Height:" w={40} value="0.022" unit="m" />
              </Section>
              <Section title="Position">
                <TextField id="px" label="x:" w={15} value="-0.074" unit="m" />
                <TextField id="py" label="y:" w={15} value="0" unit="m" />
                <TextField id="pz" label="z:" w={15} value="0" unit="m" />
              </Section>
              <Section title="Axis"><Choice id="axis" label="Axis type:" w={51} value="x-axis" /></Section>
              <Section title="Rotation Angle"><TextField id="rot" label="Rotation:" w={48} value="0" unit="deg" uw={26} /></Section>
              <Section title="Layers" closed />
              <Section title="Selections of Resulting Entities" pad="8px 5px 4px 4px">
                <Choice id="con" label="Contribute to:" w={69} value="None"><PushButton>New</PushButton></Choice>
              </Section>
              <CheckSet>
                <Legend><Check type="checkbox" id="res" /><label htmlFor="res">Resulting objects selection</label></Legend>
                <CutOff />
              </CheckSet>
            </Form>
            <VScroll>
              <VThumb><Grip $v /></VThumb>
              <Arrow $to="border-top" $off="border-bottom" />
            </VScroll>
          </SettingsBody>
        </Panel>

        <RightSide>
          <Graphics>
            <IconBar $h={25} $align="flex-end">
              <PanelTools $c="#b9bfc8"><Caret $s={3} $c="#b9bfc8" /><Icon name="pin" size={9} /></PanelTools>
            </IconBar>
            <IconBar $h={18} $pad="0 2px 0 0" $align="flex-end"><ToolRun names={GTOOLS} w={19} end={16} /></IconBar>
            <View />
          </Graphics>
          <Bottom>
            <PanelTabs $pad="6px 0 0 3px" $gap={5}>
              <PanelTab>Messages</PanelTab>
              <PanelTab>Progress</PanelTab>
              <PanelTab>Log</PanelTab>
              <PanelTab $on="#3c68a4">Table</PanelTab>
              <PanelTools $c="#b9bfc8"><Caret $s={3} $c="#b9bfc8" /><Icon name="pin" size={9} /><Icon name="close" size={9} /></PanelTools>
            </PanelTabs>
            <IconBar $h={25} $pad="0 5px"><ToolRun names={TTOOLS} w={19} m={8} end={12} /></IconBar>
          </Bottom>
        </RightSide>
      </Work>

      <Status>953 MB | 1052 MB</Status>
    </Screen>
  );
}
